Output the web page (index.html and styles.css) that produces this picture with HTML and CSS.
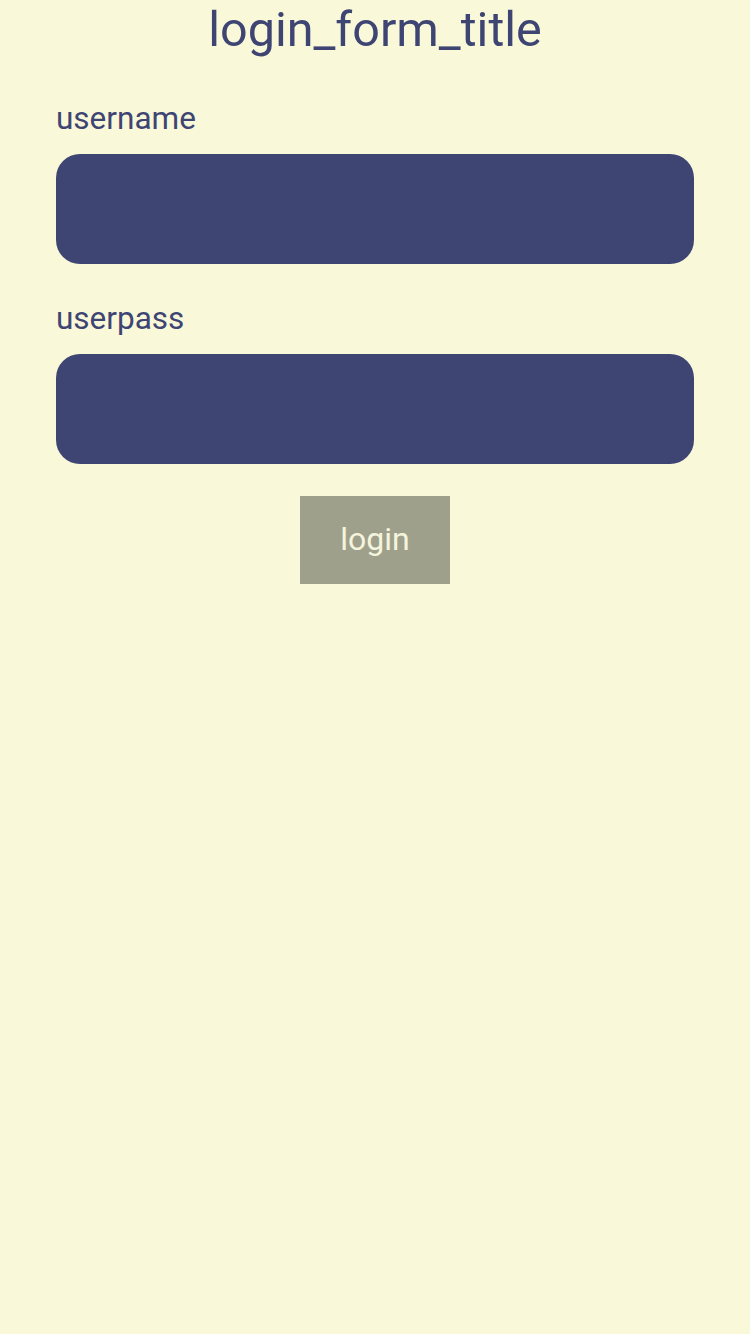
FILE: index.html
```html
<!DOCTYPE html>
<html>
<head>
<meta charset="utf-8">
<link rel="stylesheet" href="styles.css">
</head>
<body>
<div class="page">
  <h1 class="title">login_form_title</h1>
  <form class="form">
    <label class="label">username</label>
    <div class="field"></div>
    <label class="label label-second">userpass</label>
    <div class="field"></div>
    <div class="actions">
      <button type="button" class="btn">login</button>
    </div>
  </form>
</div>
</body>
</html>
```
FILE: styles.css
```css
html, body {
  margin: 0;
  padding: 0;
  background: #f9f8d9;
}
body {
  font-family: Roboto, "Liberation Sans", sans-serif;
  width: 750px;
  height: 1334px;
}
.page {
  display: flex;
  flex-direction: column;
}
.title {
  margin: 0;
  font-size: 48.5px;
  font-weight: 400;
  line-height: 60px;
  text-align: center;
  color: #3e4573;
}
.form {
  display: flex;
  flex-direction: column;
  padding: 0 56px;
  margin-top: 40px;
}
.label {
  font-size: 31.5px;
  line-height: 38px;
  color: #3e4573;
  margin-bottom: 16px;
}
.label-second {
  margin-top: 36px;
}
.field {
  height: 110px;
  background: #3e4573;
  border-radius: 24px;
}
.actions {
  display: flex;
  justify-content: center;
  margin-top: 32px;
}
.btn {
  width: 150px;
  height: 88px;
  border: none;
  background: #9fa08c;
  color: #f5f4dc;
  font-family: Roboto, "Liberation Sans", sans-serif;
  font-size: 32px;
  line-height: 36px;
  padding: 0 0 2px;
  border-radius: 0;
}
```
